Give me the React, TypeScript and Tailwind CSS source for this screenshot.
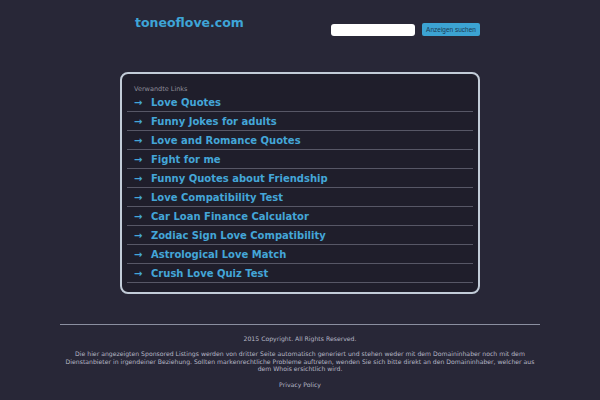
import React from 'react';

const links = [
  'Love Quotes',
  'Funny Jokes for adults',
  'Love and Romance Quotes',
  'Fight for me',
  'Funny Quotes about Friendship',
  'Love Compatibility Test',
  'Car Loan Finance Calculator',
  'Zodiac Sign Love Compatibility',
  'Astrological Love Match',
  'Crush Love Quiz Test',
];

export default function App() {
  return (
    <div className="min-h-[400px] w-full bg-[#282737] font-['DejaVu_Sans',sans-serif]">
      {/* Header */}
      <div className="mx-auto flex h-[72px] w-[360px] justify-between">
        <div className="ml-[15px] mt-[15px] text-[12.5px] font-bold leading-[15px] text-[#3ea4d6]">
          toneoflove.com
        </div>
        <div className="mt-[23px] flex items-start gap-[7px]">
          <input
            type="text"
            className="mt-[1px] h-[12px] w-[84px] rounded-[3px] bg-white outline-none"
          />
          <button className="h-[13px] w-[58px] rounded-[2px] bg-[#3ca3d2] font-['Liberation_Sans',sans-serif] text-[6.5px] leading-[13px] text-[#1d3a52]">
            Anzeigen suchen
          </button>
        </div>
      </div>

      {/* Links box */}
      <div className="mx-auto w-[360px] rounded-[8px] border-2 border-[#c2ccd8] bg-[#1f1e2b] px-[5px] pb-[9px] pt-[11px]">
        <div className="pl-[7px] text-[6.5px] leading-[8px] text-[#8d8d99]">Verwandte Links</div>
        {links.map((l) => (
          <div key={l} className="flex h-[19px] items-center border-b border-[#575766] pl-[7px] pt-[1px]">
            <span className="w-[17px] text-[10px] font-bold text-[#44a6d8]">→</span>
            <span className="text-[10px] font-bold text-[#44a6d8]">{l}</span>
          </div>
        ))}
      </div>

      {/* Footer */}
      <div className="mx-auto mt-[30px] w-[480px] border-t border-[#8b8fa0] pb-[10px] text-center text-[6.15px] text-[#b6b7c6]">
        <div className="mt-[10px] leading-[8px]">2015 Copyright. All Rights Reserved.</div>
        <div className="mt-[7px] leading-[7.5px]">
          Die hier angezeigten Sponsored Listings werden von dritter Seite automatisch generiert und stehen weder mit dem Domaininhaber noch mit dem Dienstanbieter in irgendeiner Beziehung. Sollten markenrechtliche Probleme auftreten, wenden Sie sich bitte direkt an den Domaininhaber, welcher aus dem Whois ersichtlich wird.
        </div>
        <div className="mt-[8px] leading-[8px]">Privacy Policy</div>
      </div>
    </div>
  );
}
